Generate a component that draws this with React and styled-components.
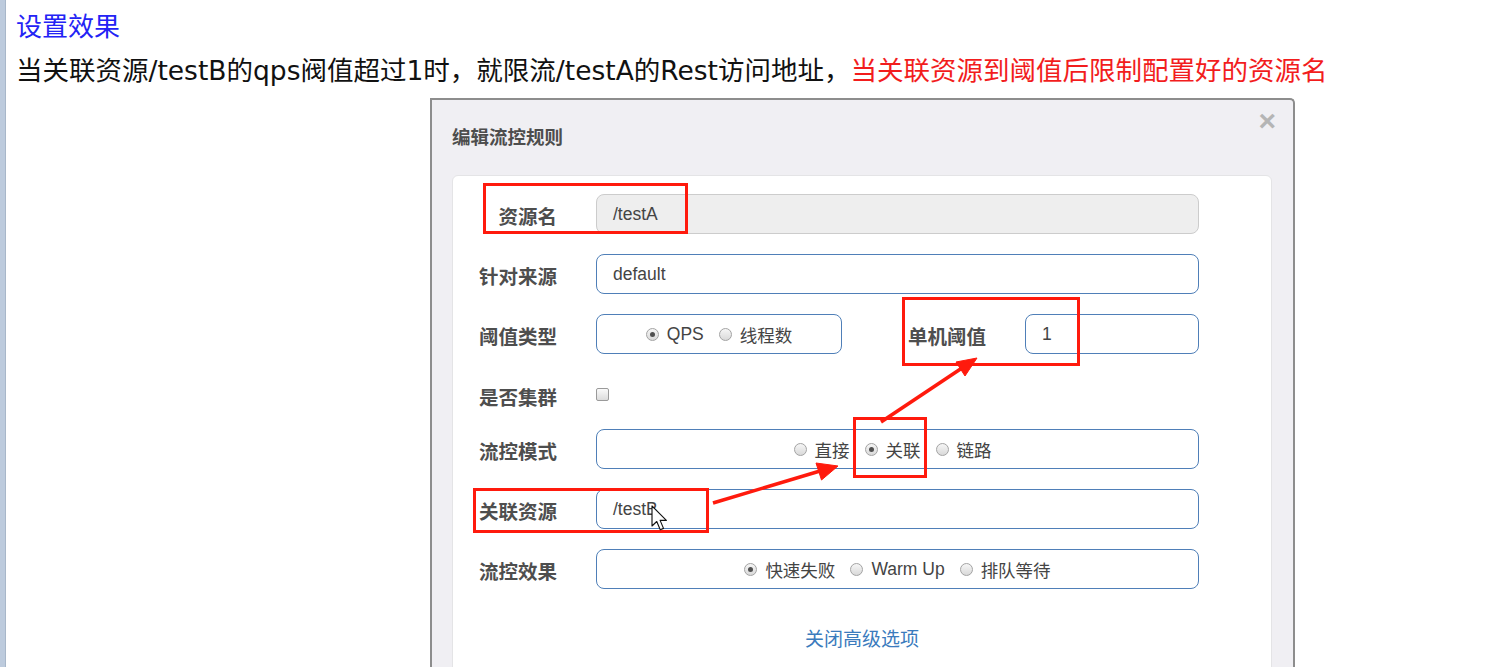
import React from "react";
import styled, { createGlobalStyle } from "styled-components";

const GlobalStyle = createGlobalStyle`
  html, body { margin: 0; padding: 0; background: #ffffff; }
  body { font-family: "Liberation Sans", "Noto Sans CJK SC", sans-serif; }
  * { box-sizing: border-box; }
`;

const Page = styled.div`
  position: relative;
  display: flex;
  width: 1508px;
  height: 667px;
  overflow: hidden;
  background: #ffffff;
`;

const SideBar = styled.div`
  flex: 0 0 6px;
  background: #bdcbdd;
  border-right: 1px solid #a8b7c9;
`;

const Content = styled.div`
  flex: 1;
  padding: 7px 0 0 10px;
  display: flex;
  flex-direction: column;
`;

const Title = styled.div`
  font-family: "Noto Sans CJK SC", sans-serif;
  font-size: 26px;
  line-height: 36px;
  color: #2323f5;
`;

const Desc = styled.div`
  margin-top: 10px;
  font-family: "DejaVu Sans", "Noto Sans CJK SC", sans-serif;
  font-size: 26.5px;
  line-height: 36px;
  color: #111111;
  white-space: nowrap;
`;

const Red = styled.span`
  color: #f21d1d;
`;

const Modal = styled.div`
  margin: 9px 0 0 414px;
  width: 865px;
  height: 620px;
  flex: 0 0 auto;
  background: #f0eff3;
  border: 2px solid #8d8d8d;
  border-bottom: none;
  border-top-right-radius: 5px;
  display: flex;
  flex-direction: column;
`;

const ModalHeader = styled.div`
  height: 75px;
  padding: 0 17px 0 20px;
  display: flex;
  align-items: flex-start;
  justify-content: space-between;
`;

const ModalTitle = styled.div`
  margin-top: 23px;
  font-family: "Noto Sans CJK SC", sans-serif;
  font-size: 18.5px;
  line-height: 26px;
  font-weight: 700;
  color: #4d4d4d;
`;

const Close = styled.div`
  margin-top: 6px;
  font-family: "Liberation Sans", sans-serif;
  font-size: 30px;
  line-height: 30px;
  font-weight: 700;
  color: #b5b5b5;
`;

const Panel = styled.div`
  margin: 0 21px 0 20px;
  flex: 1;
  background: #ffffff;
  border: 1px solid #e4e4e6;
  border-radius: 6px;
  padding: 18px 72px 0 0;
  display: flex;
  flex-direction: column;
`;

const Form = styled.div`
  display: flex;
  flex-direction: column;
  gap: 20px;
`;

const Row = styled.div`
  display: flex;
  align-items: center;
  height: ${(p) => (p.$short ? "29px" : "40px")};
  margin-top: ${(p) => (p.$short ? "6px" : "0")};
`;

const Label = styled.div`
  flex: 0 0 104px;
  margin-right: 39px;
  padding-top: 3px;
  text-align: right;
  font-family: "Noto Sans CJK SC", sans-serif;
  font-size: 19.5px;
  font-weight: 700;
  color: #4e4e4e;
  white-space: nowrap;
`;

const SubLabel = styled(Label)`
  flex: 1;
`;

const Input = styled.div`
  flex: ${(p) => (p.$width ? `0 0 ${p.$width}px` : "1")};
  height: 40px;
  padding-left: 16px;
  display: flex;
  align-items: center;
  border: 1px solid ${(p) => (p.$disabled ? "#cccccc" : "#4f7fb8")};
  background: ${(p) => (p.$disabled ? "#eeeeee" : "#ffffff")};
  border-radius: 8px;
  font-family: "Liberation Sans", "Noto Sans CJK SC", sans-serif;
  font-size: 17.5px;
  color: #444444;
`;

const RadioBox = styled(Input)`
  padding-left: 0;
  padding-right: ${(p) => p.$shift || 0}px;
  justify-content: center;
  gap: 15px;
`;

const RadioItem = styled.label`
  display: flex;
  align-items: center;
  gap: 8px;
  font-family: "Liberation Sans", "Noto Sans CJK SC", sans-serif;
  font-size: 17.5px;
  color: #444444;
  white-space: nowrap;
`;

const RadioDot = styled.span`
  position: relative;
  width: 13px;
  height: 13px;
  border-radius: 50%;
  border: 1px solid #a3a3a3;
  background: linear-gradient(#f6f6f6, #d9d9d9);
  &::after {
    content: "";
    display: ${(p) => (p.$checked ? "block" : "none")};
    position: absolute;
    left: 3px;
    top: 3px;
    width: 5px;
    height: 5px;
    border-radius: 50%;
    background: #505050;
  }
`;

const CheckBox = styled.span`
  width: 13px;
  height: 13px;
  border: 1px solid #9a9a9a;
  border-radius: 2px;
  background: linear-gradient(#fafafa, #dcdcdc);
`;

const LinkRow = styled.div`
  margin-top: 36px;
  padding-left: 72px;
  text-align: center;
  font-family: "Noto Sans CJK SC", sans-serif;
  font-size: 19px;
  line-height: 26px;
  color: #3b7bbd;
`;

const RedBox = styled.div`
  position: absolute;
  border: 3px solid #ff1a0d;
  pointer-events: none;
`;

const Overlay = styled.svg`
  position: absolute;
  left: 0;
  top: 0;
  pointer-events: none;
`;

function Radio({ checked, children }) {
  return (
    <RadioItem>
      <RadioDot $checked={checked} />
      {children}
    </RadioItem>
  );
}

const boxes = [
  { l: 483, t: 183, w: 205, h: 51 },
  { l: 902, t: 297, w: 178, h: 69 },
  { l: 853, t: 417, w: 74, h: 61 },
  { l: 473, t: 488, w: 236, h: 45 },
];

export default function App() {
  return (
    <>
      <GlobalStyle />
      <Page>
        <SideBar />
        <Content>
          <Title>设置效果</Title>
          <Desc>
            当关联资源/testB的qps阀值超过1时，就限流/testA的Rest访问地址，
            <Red>当关联资源到阈值后限制配置好的资源名</Red>
          </Desc>
          <Modal>
            <ModalHeader>
              <ModalTitle>编辑流控规则</ModalTitle>
              <Close>×</Close>
            </ModalHeader>
            <Panel>
              <Form>
                <Row>
                  <Label>资源名</Label>
                  <Input $disabled>/testA</Input>
                </Row>
                <Row>
                  <Label>针对来源</Label>
                  <Input>default</Input>
                </Row>
                <Row>
                  <Label>阈值类型</Label>
                  <RadioBox $width={246}>
                    <Radio checked>QPS</Radio>
                    <Radio>线程数</Radio>
                  </RadioBox>
                  <SubLabel>单机阈值</SubLabel>
                  <Input $width={174}>1</Input>
                </Row>
                <Row $short>
                  <Label>是否集群</Label>
                  <CheckBox />
                </Row>
                <Row>
                  <Label>流控模式</Label>
                  <RadioBox $shift={10}>
                    <Radio>直接</Radio>
                    <Radio checked>关联</Radio>
                    <Radio>链路</Radio>
                  </RadioBox>
                </Row>
                <Row>
                  <Label>关联资源</Label>
                  <Input>/testB</Input>
                </Row>
                <Row>
                  <Label>流控效果</Label>
                  <RadioBox>
                    <Radio checked>快速失败</Radio>
                    <Radio>Warm Up</Radio>
                    <Radio>排队等待</Radio>
                  </RadioBox>
                </Row>
              </Form>
              <LinkRow>关闭高级选项</LinkRow>
            </Panel>
          </Modal>
        </Content>
        {boxes.map((b, i) => (
          <RedBox
            key={i}
            style={{ left: b.l, top: b.t, width: b.w, height: b.h }}
          />
        ))}
        <Overlay width="1508" height="667" viewBox="0 0 1508 667">
          <g fill="#ff1a0d" stroke="#ff1a0d">
            <line x1="713" y1="503" x2="820" y2="471" strokeWidth="3.5" />
            <polygon points="838,466 821.5,480 816,463" strokeWidth="1" />
            <line x1="881" y1="422" x2="962" y2="368" strokeWidth="3.5" />
            <polygon points="977,358 965,376 956,362" strokeWidth="1" />
          </g>
          <path
            transform="translate(652 506) scale(1.25)"
            d="M0 0 L0 16 L3.8 12.4 L6.6 19 L9.2 17.9 L6.5 11.5 L11.5 11.5 Z"
            fill="#ffffff"
            stroke="#111111"
            strokeWidth="0.9"
            strokeLinejoin="round"
          />
        </Overlay>
      </Page>
    </>
  );
}
